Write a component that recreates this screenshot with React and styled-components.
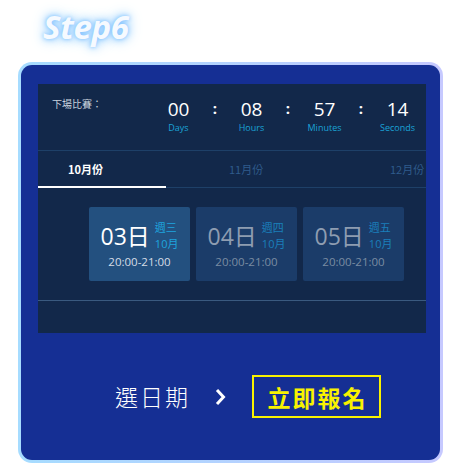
import React from "react";
import styled, { createGlobalStyle } from "styled-components";

const Global = createGlobalStyle`
  body {
    margin: 0;
    background: #ffffff;
    font-family: "Open Sans", "Noto Sans CJK TC", sans-serif;
  }
`;

const Page = styled.div`
  width: 460px;
  height: 470px;
  overflow: hidden;
`;

const StepTitle = styled.h1`
  margin: 0;
  padding: 6px 0 0 43px;
  height: 52px;
  box-sizing: border-box;
  font-family: "Open Sans", sans-serif;
  font-style: italic;
  font-weight: 700;
  font-size: 33px;
  line-height: 42px;
  letter-spacing: -0.3px;
  color: #f6faff;
  text-shadow: 0 0 4px #7cc0ff, 0 0 10px #8ecbff, 0 0 16px #b0d9ff;
`;

const Frame = styled.div`
  margin: 10px 17px 0 18px;
  padding: 3px;
  border-radius: 14px;
  background: linear-gradient(90deg, #a6dcff 0%, #b4d2ff 50%, #c6c9ff 100%);
`;

const Card = styled.div`
  height: 395px;
  box-sizing: border-box;
  border-radius: 11px;
  background: #152f94;
  padding: 19px 14px 0 17px;
`;

const Panel = styled.div`
  background: #12284a;
  overflow: hidden;
`;

const Countdown = styled.div`
  display: flex;
  height: 67px;
  box-sizing: border-box;
  padding: 13px 3px 0 14px;
  border-bottom: 1px solid #1e4068;
`;

const NextLabel = styled.div`
  flex: 1;
  color: #c8d2de;
  font-size: 10px;
  line-height: 14px;
  font-family: "Noto Sans CJK TC", sans-serif;
`;

const Unit = styled.div`
  width: 51px;
  display: flex;
  flex-direction: column;
  align-items: center;
`;

const Num = styled.div`
  color: #ffffff;
  font-size: 19px;
  line-height: 24px;
`;

const UnitLabel = styled.div`
  color: #1aa3d6;
  font-size: 9px;
  line-height: 14px;
`;

const Colon = styled.div`
  width: 22px;
  text-align: center;
  color: #ffffff;
  font-size: 15px;
  font-weight: 700;
  line-height: 22px;
`;

const Tabs = styled.div`
  display: flex;
  height: 36px;
  border-bottom: 1px solid #1e4068;
`;

const Tab = styled.div`
  position: relative;
  flex: 0 0 161px;
  box-sizing: border-box;
  padding-left: 30px;
  line-height: 36px;
  font-size: 11px;
  font-weight: ${(p) => (p.$active ? 700 : 400)};
  color: ${(p) => (p.$active ? "#ffffff" : "#2f5b8c")};
  font-family: "Noto Sans CJK TC", sans-serif;

  &::after {
    content: "";
    display: ${(p) => (p.$active ? "block" : "none")};
    position: absolute;
    left: 0;
    bottom: -1px;
    width: 128px;
    height: 2px;
    background: #ffffff;
  }
`;

const Days = styled.div`
  display: flex;
  gap: 6px;
  padding: 19px 0 19px 51px;
  border-bottom: 1px solid #3a5a80;
`;

const DayCard = styled.div`
  width: 101px;
  height: 74px;
  box-sizing: border-box;
  border-radius: 2px;
  background: ${(p) => (p.$active ? "#23507f" : "#1b3c69")};
  display: flex;
  flex-direction: column;
  align-items: center;
  padding-top: 13px;
`;

const DateRow = styled.div`
  display: flex;
  align-items: center;
  gap: 5px;
`;

const DateNum = styled.div`
  font-size: 23px;
  line-height: 30px;
  color: ${(p) => (p.$active ? "#ffffff" : "#8e9db1")};
  font-family: "Open Sans", "Noto Sans CJK TC", sans-serif;
`;

const Week = styled.div`
  display: flex;
  flex-direction: column;
  font-size: 11px;
  line-height: 16px;
  color: ${(p) => (p.$active ? "#1ea4de" : "#1a7fba")};
  font-family: "Open Sans", "Noto Sans CJK TC", sans-serif;
`;

const Time = styled.div`
  margin-top: 2px;
  font-size: 11.5px;
  line-height: 16px;
  color: ${(p) => (p.$active ? "#d6dde6" : "#7a8ca2")};
`;

const Strip = styled.div`
  height: 32px;
`;

const Actions = styled.div`
  display: flex;
  align-items: center;
  padding: 42px 0 0 77px;
  font-family: "Noto Sans CJK TC", sans-serif;
`;

const Pick = styled.div`
  color: #ffffff;
  font-size: 23px;
  font-weight: 300;
  letter-spacing: 2px;
  margin-top: -2px;
`;

const Chevron = styled.svg`
  margin: 0 26px 0 24px;
`;

const SignUp = styled.div`
  box-sizing: border-box;
  width: 129px;
  height: 43px;
  padding-left: 2px;
  border: 2px solid #f8f200;
  color: #f8f200;
  font-size: 23px;
  font-weight: 700;
  letter-spacing: 2px;
  display: flex;
  align-items: center;
  justify-content: center;
`;

const units = [
  ["00", "Days"],
  ["08", "Hours"],
  ["57", "Minutes"],
  ["14", "Seconds"],
];

const days = [
  { d: "03", w: "週三", active: true },
  { d: "04", w: "週四" },
  { d: "05", w: "週五" },
];

export default function App() {
  return (
    <Page>
      <Global />
      <StepTitle>Step6</StepTitle>
      <Frame>
        <Card>
          <Panel>
            <Countdown>
              <NextLabel>下場比賽：</NextLabel>
              {units.map(([n, l], i) => (
                <React.Fragment key={l}>
                  {i > 0 && <Colon>:</Colon>}
                  <Unit>
                    <Num>{n}</Num>
                    <UnitLabel>{l}</UnitLabel>
                  </Unit>
                </React.Fragment>
              ))}
            </Countdown>
            <Tabs>
              <Tab $active>10月份</Tab>
              <Tab>11月份</Tab>
              <Tab>12月份</Tab>
            </Tabs>
            <Days>
              {days.map((x) => (
                <DayCard key={x.d} $active={x.active}>
                  <DateRow>
                    <DateNum $active={x.active}>{x.d}日</DateNum>
                    <Week $active={x.active}>
                      <span>{x.w}</span>
                      <span>10月</span>
                    </Week>
                  </DateRow>
                  <Time $active={x.active}>20:00-21:00</Time>
                </DayCard>
              ))}
            </Days>
            <Strip />
          </Panel>
          <Actions>
            <Pick>選日期</Pick>
            <Chevron width="12" height="18" viewBox="0 0 12 18">
              <path d="M3 2 L9.5 9 L3 16" fill="none" stroke="#ffffff" strokeWidth="3" />
            </Chevron>
            <SignUp>立即報名</SignUp>
          </Actions>
        </Card>
      </Frame>
    </Page>
  );
}
